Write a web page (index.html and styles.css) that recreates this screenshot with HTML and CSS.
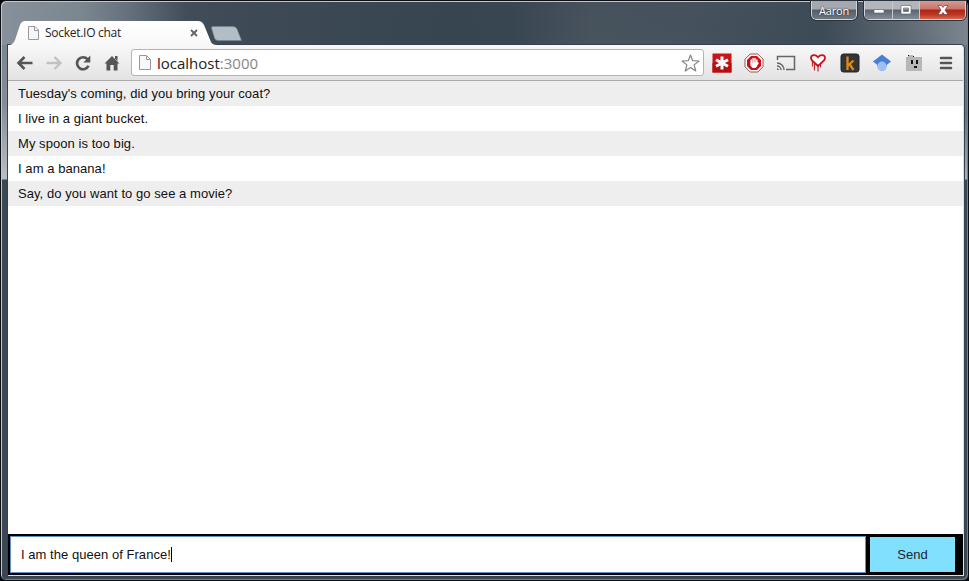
FILE: index.html
```html
<!DOCTYPE html>
<html lang="en">
<head>
<meta charset="utf-8">
<title>Socket.IO chat</title>
<link rel="stylesheet" href="styles.css">
</head>
<body>
<div class="window">
  <header class="titlebar">
    <div class="tab">
      <svg class="tab-shape" width="212" height="25" viewBox="0 0 212 25"><defs><linearGradient id="tabfill" x2="0" y2="1"><stop stop-color="#fff"/><stop offset="1" stop-color="#f8f8f8"/></linearGradient></defs><path d="M0 25V24Q4 24 6 19L11 4Q12.500 0 16 0H189Q193 0 195 4L202 21Q203.500 24 208 24V25Z" fill="url(#tabfill)"/></svg>
      <svg class="page-icon" width="11" height="14" viewBox="0 0 11 14"><path d="M.5.500H7L10.500 4V13.500H.5ZM6.500.500V4.500H10.500" fill="#f5f6f8" stroke="#999"/></svg>
      <span class="tab-title">Socket.IO chat</span>
      <svg class="tab-close" width="8" height="8" viewBox="0 0 8 8"><path d="M1 1L7 7M7 1L1 7" stroke="#606468" stroke-width="1.800"/></svg>
    </div>
    <svg class="new-tab" width="32" height="16" viewBox="0 0 32 16"><path d="M2 .500H22Q25 .500 26 3L30.500 14.500H7Q4.500 14.500 3.500 12L.5 2Q0 .500 2 .500Z" fill="#b2bdc6" stroke="#77838e" stroke-opacity=".6"/></svg>
    <div class="user">Aaron</div>
    <div class="controls">
      <span class="control minimize"><svg width="14" height="8" viewBox="0 0 14 8"><path d="M2 3.500H12V7H2Z" fill="#fff" stroke="#555d69" stroke-width=".6"/></svg></span>
      <span class="control maximize"><svg width="12" height="10" viewBox="0 0 12 10"><path d="M1 .500H11V9H1ZM3.500 3V6.500H8.500V3Z" fill="#fff" fill-rule="evenodd" stroke="#555d69" stroke-width=".6"/></svg></span>
      <span class="control close"><svg width="12" height="10" viewBox="0 0 12 10"><path d="M1 .500H4.500L6 2.500 7.500.500H11L8 5 11 9.500H7.500L6 7.500 4.500 9.500H1L4 5Z" fill="#fff" stroke="#694044" stroke-width=".7"/></svg></span>
    </div>
  </header>
  <main class="content">
    <nav class="toolbar">
      <span class="nav"><svg width="18" height="16" viewBox="0 0 18 16"><path d="M16.500 8H3M8.500 2L2.500 8 8.500 14" fill="none" stroke="#555" stroke-width="2.600"/></svg></span>
      <span class="nav"><svg width="18" height="16" viewBox="0 0 18 16"><path d="M1.500 8H15M9.500 2L15.500 8 9.500 14" fill="none" stroke="#c2c2c2" stroke-width="2.300"/></svg></span>
      <span class="nav"><svg width="18" height="16" viewBox="0 0 18 16"><path d="M13.500 4.200A6 6 0 1 0 14.500 10.800" fill="none" stroke="#555" stroke-width="2.700"/><path d="M16.300.500V7.500H9.300Z" fill="#555"/></svg></span>
      <span class="nav"><svg width="16" height="16" viewBox="0 0 16 16"><path d="M8 1L15.500 8.500H13.500V15.500H9.700V10H6.300V15.500H2.500V8.500H.5Z" fill="#555"/><path d="M11 1H13.500V6L11 3.500Z" fill="#555"/></svg></span>
      <div class="address">
        <svg class="page-icon" width="12" height="15" viewBox="0 0 12 15"><path d="M.5.500H7.500L11.500 4.500V14.500H.5ZM7.500.500V4.500H11.500" fill="#f7f8fa" stroke="#999"/></svg>
        <span class="url">localhost<span class="port">:3000</span></span>
        <svg class="star" width="19" height="18" viewBox="0 0 19 18"><path d="M9.500 1L11.700 6.700 18 7 13.100 10.900 14.800 17 9.500 13.500 4.200 17 5.900 10.900 1 7 7.300 6.700Z" fill="#fff" stroke="#858585" stroke-width="1.200" stroke-linejoin="round"/></svg>
      </div>
      <div class="extensions">
        <span class="ext"><svg width="20" height="20" viewBox="0 0 20 20"><path d="M.5.500H19.500V19.500H.5Z" fill="#c71519"/><path d="M.5 10H19.500V19.500H.5Z" fill="#b70e12"/><path d="M10 3.500V16.500M4 6.700L16 13.300M16 6.700L4 13.300" stroke="#fff" stroke-width="3"/></svg></span>
        <span class="ext"><svg width="20" height="20" viewBox="0 0 20 20"><path d="M6.200 1H13.800L19 6.200V13.800L13.800 19H6.200L1 13.800V6.200Z" fill="#fff" stroke="#985050"/><path d="M7 3H13L17 7V13L13 17H7L3 13V7Z" fill="#c90f18"/><path d="M7.200 11V7M9.100 10V5.500M11 10V5.500M12.800 11V7M14 10L12 13" stroke="#fff" stroke-width="1.500" stroke-linecap="round"/><path d="M6.500 9.500H13V13L11.500 15H8.500L6.500 12.500Z" fill="#fff"/></svg></span>
        <span class="ext"><svg width="20" height="18" viewBox="0 0 20 18"><path d="M1.500 6V2.500H18.500V15.500H10" fill="none" stroke="#666" stroke-width="1.500"/><path d="M1 9A7 7 0 0 1 8 16M1 12A4 4 0 0 1 5 16" fill="none" stroke="#666" stroke-width="1.400"/><path d="M1 14A2.500 2.500 0 0 1 3 16H1Z" fill="#666"/></svg></span>
        <span class="ext"><svg width="18" height="20" viewBox="0 0 18 20"><path d="M3.500 8V13M5.500 10V17M9 12V18M11.500 11V14" stroke="#b92a30" stroke-width="1.200" stroke-linecap="round"/><path d="M9 13L3 7.500C-.5 2 6 .5 9 4.200 12 .5 18.500 2 15 7.500Z" fill="#fff" stroke="#c9131d" stroke-width="1.800"/></svg></span>
        <span class="ext"><svg width="20" height="20" viewBox="0 0 20 20"><rect x="1" y="1" width="18" height="18" rx="2.500" fill="#333536" stroke="#222"/><path d="M7.500 3.500V17M13.500 7.500L8 12.500M9.500 11L13.500 17" fill="none" stroke="#e18a19" stroke-width="2.300"/></svg></span>
        <span class="ext"><svg width="20" height="18" viewBox="0 0 20 18"><path d="M5 7H15V12Q14 17 10 17 6 17 5 12Z" fill="#8db4f1"/><path d="M10 .500L19 7.500 14 11.500Q10 6 6 11.500L1 7.500Z" fill="#4c7ed5"/><circle cx="10" cy="12.200" r="4.600" fill="#9fc0f5"/></svg></span>
        <span class="ext"><svg width="18" height="18" viewBox="0 0 18 18"><path d="M1 3H3V1H8V3H17V17H1Z" fill="#b7b7b7"/><path d="M3 2V1H8V3H9V2H8V1H4V2ZM6 6H8V10H6ZM11 6H13V10H11ZM9 12H12V14H9Z" fill="#111"/></svg></span>
        <span class="ext"><svg width="14" height="14" viewBox="0 0 14 14"><path d="M2 2H12M2 7H12M2 12H12" stroke="#555" stroke-width="2.600" stroke-linecap="round"/></svg></span>
      </div>
    </nav>
    <ul class="messages">
      <li>Tuesday's coming, did you bring your coat?</li>
      <li>I live in a giant bucket.</li>
      <li>My spoon is too big.</li>
      <li>I am a banana!</li>
      <li>Say, do you want to go see a movie?</li>
    </ul>
    <div class="composer">
      <div class="message-input">I am the queen of France!<span class="caret"></span></div>
      <button class="send">Send</button>
    </div>
  </main>
</div>
</body>
</html>
```
FILE: styles.css
```css
* { box-sizing: border-box; }
body { margin: 0; background: #050609; font-family: "Liberation Sans", Arial, sans-serif; }
svg { display: block; flex: none; }
.window {
  width: 969px;
  height: 581px;
  display: flex;
  flex-direction: column;
  padding: 0 4px 4px 6px;
  border: 1px solid #0b0e13;
  border-radius: 6px;
  box-shadow: inset 1px 1px 0 #bfc8d0, inset -1px -1px 0 #74818d;
  background:
    linear-gradient(#7b8590 0, #858e98 60px, #b7bec5 134px, #3c4854 135px, #3b4854 100%) 0 44px / 8px 537px no-repeat,
    linear-gradient(#69747f 0, #65717d 70px, #aab2ba 134px, #3c4854 135px, #3c4955 100%) right 44px / 6px 537px no-repeat,
    linear-gradient(20deg, transparent 45%, #3c495544 70%, transparent 90%) 0 0 / 100% 44px no-repeat,
    linear-gradient(90deg, #88919b 0, #7b868f 80px, #63707b 130px, #414e5a 185px, #3e4b57 230px, #374551 450px, #384652 510px, #49545e 590px, #485560 690px, #3d4b56 820px, #5d6873 900px, #7b858f 967px) 0 0 / 100% 45px no-repeat,
    #3c4955;
}
.titlebar { height: 44px; flex: none; display: flex; align-items: flex-start; }
.tab { position: relative; width: 203px; height: 25px; margin-top: 20px; padding: 5px 12px 0 21px; display: flex; align-items: flex-start; }
.tab-shape { position: absolute; left: 2px; top: 0; }
.tab .page-icon { position: relative; margin-right: 6px; }
.tab-title { position: relative; font: 12px/14px "Open Sans", sans-serif; letter-spacing: -.28px; color: #1f2327; white-space: nowrap; }
.tab-close { position: relative; margin: 3px 0 0 auto; }
.new-tab { margin: 25px 0 0 1px; }
.user, .controls { border: 1px solid #d0d5da; border-top: 0; border-radius: 0 0 5px 5px; outline: 1px solid #2b343d; }
.user {
  width: 46px; height: 19px; margin-left: auto; margin-right: 7px;
  background: linear-gradient(#a4a9b0 0 8px, #535d67 9px, #717a83);
  color: #fff; font: 11px/20px "Open Sans", sans-serif; letter-spacing: -.2px; text-align: center; text-shadow: 0 0 2px #222;
}
.controls { width: 102px; height: 19px; margin-right: -2px; display: flex; overflow: hidden; }
.control { height: 18px; display: flex; align-items: center; justify-content: center; background: linear-gradient(#b2b5bb 0 8px, #59636e 9px, #858e98); border-right: 1px solid #c4c9ce; }
.minimize { width: 28px; }
.maximize { width: 27px; }
.close { flex: 1; background: linear-gradient(#d79b92 0, #c97468 8px, #ae2314 9px, #bd3a26 14px, #d6684e); border-right: 0; }
.content { flex: 1; min-height: 0; display: flex; flex-direction: column; margin: 0 0 0 1px; border: 1px solid #dce1e5; border-width: 0 1px 1px 0; border-top-right-radius: 4px; background: #fff; box-shadow: 0 0 0 1px #35414c; }
.toolbar { height: 36px; flex: none; display: flex; align-items: center; padding-left: 3px; background: linear-gradient(#f8f8f8, #e3e3e3); border-bottom: 1px solid #aaa; border-top-right-radius: 4px; }
.nav { width: 29px; height: 35px; display: flex; align-items: center; justify-content: center; }
.nav svg { margin-left: -1px; }
.address { width: 573px; height: 27px; margin-left: 4px; padding: 0 3px 0 7px; display: flex; align-items: center; background: #fff; border: 1px solid #b4b4b4; border-radius: 3px; }
.url { margin-left: 6px; font: 15px/24px "Open Sans", sans-serif; letter-spacing: 0; color: #222; }
.port { color: #888; }
.star { margin-left: auto; }
.extensions { display: flex; margin-left: 2px; }
.ext { width: 32px; height: 35px; display: flex; align-items: center; justify-content: center; }
.messages { flex: 1; margin: 0; padding: 0; list-style: none; }
.messages li { height: 25px; padding-left: 10px; font-size: 13px; line-height: 25px; letter-spacing: .06px; color: #111; }
.messages li:nth-child(odd) { background: #eee; }
.composer { height: 41px; flex: none; padding: 3px 8px 3px 2px; display: flex; justify-content: space-between; background: #000; }
.message-input { width: 856px; height: 37px; margin-top: -1px; padding-left: 10px; display: flex; align-items: center; border: 1px solid #668fcf; background: #fff; font-size: 13px; letter-spacing: .04px; color: #111; }
.caret { width: 1px; height: 15px; background: #000; }
.send { width: 85px; height: 35px; padding: 0; border: 0; background: #82e0ff; font: 13px "Liberation Sans", Arial, sans-serif; color: #172832; }
```
